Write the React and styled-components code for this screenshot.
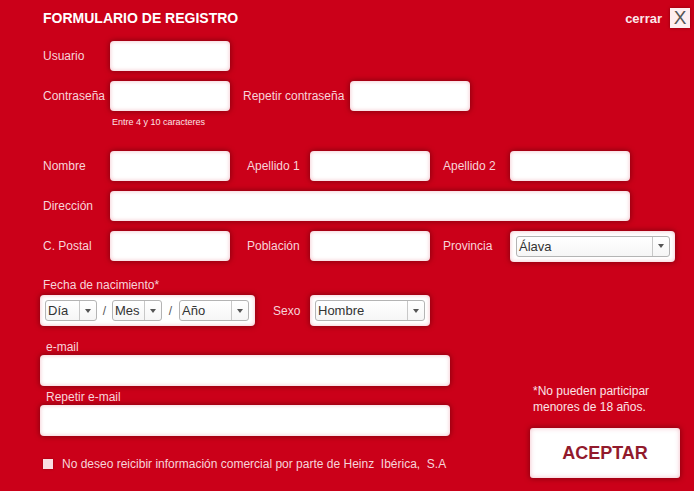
import React from 'react';
import styled, { createGlobalStyle } from 'styled-components';

const GlobalStyle = createGlobalStyle`
  html, body {
    margin: 0;
    padding: 0;
    background: #cb0019;
  }
  body {
    font-family: "Liberation Sans", Arial, sans-serif;
  }
`;

const Panel = styled.div`
  width: 694px;
  height: 491px;
  background: #cb0019;
  box-sizing: border-box;
  overflow: hidden;
`;

const Header = styled.div`
  display: flex;
  align-items: center;
  justify-content: space-between;
  height: 20px;
  margin-top: 8px;
  padding-left: 43px;
  padding-right: 4px;
`;

const Title = styled.h1`
  margin: 0;
  color: #fff;
  font-size: 14px;
  font-weight: bold;
  letter-spacing: 0;
`;

const Close = styled.div`
  display: flex;
  align-items: center;
  gap: 8px;
  color: #fbe6e9;
  font-size: 13px;
  font-weight: bold;
`;

const CloseBox = styled.div`
  width: 20px;
  height: 20px;
  background: #fdeef0;
  color: #555;
  font-size: 19px;
  font-weight: normal;
  display: flex;
  align-items: center;
  justify-content: center;
  box-shadow: 0 0 3px rgba(90, 0, 0, 0.6);
`;

const Form = styled.div`
  padding-left: 40px;
  margin-top: 13px;
`;

const Row = styled.div`
  display: flex;
  align-items: center;
  height: ${p => p.h || 30}px;
  margin-top: ${p => p.mt || 0}px;
`;

const Label = styled.div`
  box-sizing: border-box;
  width: ${p => p.w}px;
  margin-left: ${p => p.ml || 0}px;
  padding-left: ${p => (p.first ? 3 : 0)}px;
  color: #f7d4d9;
  font-size: 12px;
  white-space: nowrap;
`;

const Input = styled.div`
  box-sizing: border-box;
  width: ${p => p.w || 120}px;
  height: ${p => p.h || 30}px;
  background: #fff;
  border-radius: 4px;
  box-shadow: inset 0 0 4px rgba(220, 60, 90, 0.35), 0 0 5px 1px rgba(100, 0, 10, 0.6);
`;

const Hint = styled.div`
  margin-top: 5px;
  padding-left: 72px;
  color: #fbe3e6;
  font-size: 9px;
  line-height: 12px;
`;

const Bottom = styled.div`
  display: flex;
`;

const LeftCol = styled.div`
  width: 430px;
`;

const RightCol = styled.div`
  margin-left: 60px;
  padding-top: 122px;
`;

const FieldLabel = styled.div`
  color: #f7d4d9;
  font-size: 12px;
  line-height: 14px;
  margin-top: ${p => p.mt}px;
  padding-left: ${p => p.pl || 3}px;
`;

const SelectWrap = styled.div`
  box-sizing: border-box;
  display: flex;
  align-items: center;
  width: ${p => p.w}px;
  height: 31px;
  padding: 0 5px 0 6px;
  margin-left: ${p => p.ml || 0}px;
  background: #fff;
  border-radius: 4px;
  box-shadow: inset 0 0 4px rgba(220, 60, 90, 0.35), 0 0 5px 1px rgba(100, 0, 10, 0.6);
`;

const Select = styled.div`
  box-sizing: border-box;
  display: flex;
  width: ${p => p.w}px;
  height: 21px;
  border: 1px solid #b4b4b4;
  border-radius: 3px;
  background: linear-gradient(#fff, #f6f6f6);
  flex: ${p => (p.w ? 'none' : 1)};
`;

const SelectValue = styled.div`
  flex: 1;
  display: flex;
  align-items: center;
  padding-left: 2px;
  color: #333;
  font-size: 13px;
  border-right: 1px solid #c8c8c8;
`;

const SelectArrow = styled.div`
  width: 16px;
  display: flex;
  align-items: center;
  justify-content: center;

  &:after {
    content: "";
    border-left: 3px solid transparent;
    border-right: 3px solid transparent;
    border-top: 4px solid #555;
  }
`;

const Slash = styled.div`
  width: ${p => p.w}px;
  text-align: center;
  color: #555;
  font-size: 12px;
`;

const Check = styled.label`
  display: flex;
  align-items: center;
  gap: 9px;
  margin-top: 21px;
  padding-left: 3px;
  color: #f7d4d9;
  font-size: 12px;
`;

const CheckBox = styled.span`
  width: 10px;
  height: 10px;
  background: #f9dde1;
  box-shadow: 0 0 2px rgba(90, 0, 0, 0.5);
`;

const Note = styled.div`
  padding-left: 3px;
  color: #fbe3e6;
  font-size: 12px;
  line-height: 16px;
`;

const Button = styled.button`
  margin-top: 13px;
  width: 150px;
  height: 50px;
  background: #fff;
  border: none;
  border-radius: 3px;
  color: #921a2c;
  font-family: inherit;
  font-size: 18px;
  font-weight: bold;
  cursor: pointer;
  box-shadow: inset 0 0 5px rgba(220, 60, 90, 0.35), 0 0 5px 1px rgba(100, 0, 10, 0.6);
`;

const Dropdown = ({ value, w }) => (
  <Select w={w}>
    <SelectValue>{value}</SelectValue>
    <SelectArrow />
  </Select>
);

const App = () => {
  return (
    <Panel>
      <GlobalStyle />
      <Header>
        <Title>FORMULARIO DE REGISTRO</Title>
        <Close>
          cerrar
          <CloseBox>X</CloseBox>
        </Close>
      </Header>
      <Form>
        <Row>
          <Label w={70} first>Usuario</Label>
          <Input />
        </Row>
        <Row mt={10}>
          <Label w={70} first>Contraseña</Label>
          <Input />
          <Label w={107} ml={13}>Repetir contraseña</Label>
          <Input />
        </Row>
        <Hint>Entre 4 y 10 caracteres</Hint>
        <Row mt={23}>
          <Label w={70} first>Nombre</Label>
          <Input />
          <Label w={63} ml={17}>Apellido 1</Label>
          <Input />
          <Label w={67} ml={13}>Apellido 2</Label>
          <Input />
        </Row>
        <Row mt={10}>
          <Label w={70} first>Dirección</Label>
          <Input w={520} />
        </Row>
        <Row mt={10}>
          <Label w={70} first>C. Postal</Label>
          <Input />
          <Label w={63} ml={17}>Población</Label>
          <Input />
          <Label w={67} ml={13}>Provincia</Label>
          <SelectWrap w={165}>
            <Dropdown value="Álava" />
          </SelectWrap>
        </Row>
        <Bottom>
          <LeftCol>
            <FieldLabel mt={17}>Fecha de nacimiento*</FieldLabel>
            <Row h={31} mt={3}>
              <SelectWrap w={215} style={{ paddingLeft: 5 }}>
                <Dropdown value="Día" w={52} />
                <Slash w={15}>/</Slash>
                <Dropdown value="Mes" w={50} />
                <Slash w={17}>/</Slash>
                <Dropdown value="Año" w={70} />
              </SelectWrap>
              <Label w={37} ml={18}>Sexo</Label>
              <SelectWrap w={120} style={{ paddingLeft: 5 }}>
                <Dropdown value="Hombre" w={110} />
              </SelectWrap>
            </Row>
            <FieldLabel mt={14} pl={6}>e-mail</FieldLabel>
            <Input w={410} h={31} style={{ marginTop: 1 }} />
            <FieldLabel mt={4} pl={6}>Repetir e-mail</FieldLabel>
            <Input w={410} h={31} style={{ marginTop: 1 }} />
            <Check>
              <CheckBox />
              No deseo reicibir información comercial por parte de Heinz&nbsp; Ibérica,&nbsp; S.A
            </Check>
          </LeftCol>
          <RightCol>
            <Note>
              *No pueden participar
              <br />
              menores de 18 años.
            </Note>
            <Button>ACEPTAR</Button>
          </RightCol>
        </Bottom>
      </Form>
    </Panel>
  );
};

export default App;
